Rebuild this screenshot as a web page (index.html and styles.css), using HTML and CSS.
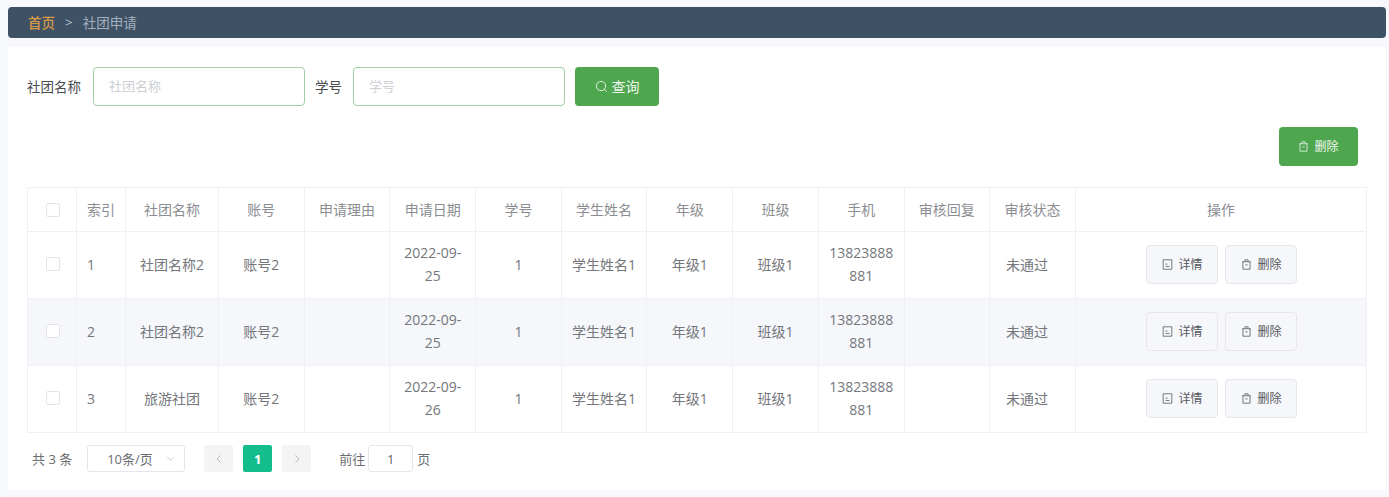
FILE: index.html
```html
<!DOCTYPE html>
<html lang="zh-CN">
<head>
    <meta charset="UTF-8">
    <title>社团申请</title>
    <link rel="stylesheet" href="styles.css">
</head>
<body>
    <div class="crumb">
        <span class="crumb-home">首页</span>
        <span class="crumb-sep">&gt;</span>
        <span class="crumb-now">社团申请</span>
    </div>

    <div class="panel">
        <div class="search">
            <label class="search-label">社团名称</label>
            <input class="search-input" placeholder="社团名称">
            <label class="search-label label-gap">学号</label>
            <input class="search-input" placeholder="学号">
            <button class="btn-green btn-search">
                <svg class="icon" viewBox="0 0 14 14"><circle cx="6.500" cy="6.500" r="5"/><path d="M10 10l2.500 2.500"/></svg>
                查询
            </button>
        </div>

        <div class="tools">
            <button class="btn-green btn-remove">
                <svg class="icon icon-small" viewBox="0 0 14 14"><path d="M1.500 3.500h11M5 3.500V1h4v2.500M2.500 3.500V13h9V3.500M5.500 7.500h3"/></svg>
                删除
            </button>
        </div>

        <table class="grid">
            <colgroup>
                <col class="c-check"><col class="c-index"><col class="c-name">
                <col class="c-std"><col class="c-std"><col class="c-std"><col class="c-std">
                <col class="c-std"><col class="c-std"><col class="c-std"><col class="c-std">
                <col class="c-std"><col class="c-std"><col>
            </colgroup>
            <thead>
                <tr>
                    <th><span class="check"></span></th>
                    <th>索引</th><th>社团名称</th><th>账号</th><th>申请理由</th><th>申请日期</th><th>学号</th>
                    <th>学生姓名</th><th>年级</th><th>班级</th><th>手机</th><th>审核回复</th><th>审核状态</th><th>操作</th>
                </tr>
            </thead>
            <tbody>
                <tr>
                    <td><span class="check"></span></td>
                    <td class="left">1</td><td>社团名称2</td><td>账号2</td><td></td><td>2022-09-25</td><td>1</td>
                    <td>学生姓名1</td><td>年级1</td><td>班级1</td><td>13823888881</td><td></td><td><span class="status">未通过</span></td>
                    <td>
                        <div class="ops">
                            <button class="btn-plain"><svg class="icon icon-small" viewBox="0 0 14 14"><path d="M1.500 1h11v12h-11zM4.500 9.500h5M4.500 6.500h2.500"/></svg>详情</button>
                            <button class="btn-plain"><svg class="icon icon-small" viewBox="0 0 14 14"><path d="M1.500 3.500h11M5 3.500V1h4v2.500M2.500 3.500V13h9V3.500M5.500 7.500h3"/></svg>删除</button>
                        </div>
                    </td>
                </tr>
                <tr class="striped">
                    <td><span class="check"></span></td>
                    <td class="left">2</td><td>社团名称2</td><td>账号2</td><td></td><td>2022-09-25</td><td>1</td>
                    <td>学生姓名1</td><td>年级1</td><td>班级1</td><td>13823888881</td><td></td><td><span class="status">未通过</span></td>
                    <td>
                        <div class="ops">
                            <button class="btn-plain"><svg class="icon icon-small" viewBox="0 0 14 14"><path d="M1.500 1h11v12h-11zM4.500 9.500h5M4.500 6.500h2.500"/></svg>详情</button>
                            <button class="btn-plain"><svg class="icon icon-small" viewBox="0 0 14 14"><path d="M1.500 3.500h11M5 3.500V1h4v2.500M2.500 3.500V13h9V3.500M5.500 7.500h3"/></svg>删除</button>
                        </div>
                    </td>
                </tr>
                <tr>
                    <td><span class="check"></span></td>
                    <td class="left">3</td><td>旅游社团</td><td>账号2</td><td></td><td>2022-09-26</td><td>1</td>
                    <td>学生姓名1</td><td>年级1</td><td>班级1</td><td>13823888881</td><td></td><td><span class="status">未通过</span></td>
                    <td>
                        <div class="ops">
                            <button class="btn-plain"><svg class="icon icon-small" viewBox="0 0 14 14"><path d="M1.500 1h11v12h-11zM4.500 9.500h5M4.500 6.500h2.500"/></svg>详情</button>
                            <button class="btn-plain"><svg class="icon icon-small" viewBox="0 0 14 14"><path d="M1.500 3.500h11M5 3.500V1h4v2.500M2.500 3.500V13h9V3.500M5.500 7.500h3"/></svg>删除</button>
                        </div>
                    </td>
                </tr>
            </tbody>
        </table>

        <div class="pager">
            <span class="pager-total">共 3 条</span>
            <div class="pager-size">
                <span>10条/页</span>
                <svg class="chevron" viewBox="0 0 10 10"><path d="M1.500 3.500L5 7l3.500-3.500"/></svg>
            </div>
            <button class="page-btn page-prev"><svg class="arrow" viewBox="0 0 10 10"><path d="M6.500 1.500L3 5l3.500 3.500"/></svg></button>
            <button class="page-btn page-on">1</button>
            <button class="page-btn"><svg class="arrow" viewBox="0 0 10 10"><path d="M3.500 1.500L7 5 3.500 8.500"/></svg></button>
            <span class="pager-goto">前往</span>
            <input class="pager-input" value="1">
            <span>页</span>
        </div>
    </div>
</body>
</html>
```

FILE: styles.css
```css
* {
    box-sizing: border-box;
}

html, body {
    height: 100%;
}

body {
    margin: 0;
    padding: 7px 3px 0 8px;
    background-color: #f6f8fb;
    font-family: "Open Sans", "Noto Sans CJK SC", sans-serif;
    font-size: 14px;
    color: #606266;
    overflow: hidden;
}

.crumb {
    display: flex;
    align-items: center;
    height: 31px;
    padding: 0 0 1px 20px;
    background-color: #3f5165;
    border-radius: 4px;
    font-size: 13.500px;
}

.crumb-home {
    color: #d79a45;
    font-weight: 500;
}

.crumb-sep {
    margin: 0 10px;
    color: #b4bfcb;
}

.crumb-now {
    color: #a3b0bf;
}

.panel {
    height: 443px;
    margin-top: 9px;
    padding: 20px 19px 0;
    background-color: #fff;
}

.search {
    display: flex;
    align-items: center;
    height: 39px;
}

.search-label {
    margin-right: 12px;
    padding-bottom: 2px;
    font-size: 13.500px;
    color: #4a4c50;
}

.label-gap {
    margin-left: 10px;
    margin-right: 11px;
}

.search-input {
    width: 212px;
    height: 39px;
    padding: 0 15px 2px;
    border: 1px solid #a0d0a2;
    border-radius: 4px;
    outline: none;
    font-family: inherit;
    font-size: 13px;
}

.search-input::placeholder {
    color: #cdcfd4;
}

.btn-green {
    display: flex;
    align-items: center;
    justify-content: center;
    height: 39px;
    padding-bottom: 2px;
    border: none;
    border-radius: 4px;
    background-color: #4ea64f;
    color: #eef6ee;
    font-family: inherit;
}

.btn-search {
    width: 84px;
    margin-left: 10px;
    font-size: 14px;
}

.tools {
    display: flex;
    justify-content: flex-end;
    padding: 21px 9px 21px 0;
}

.btn-remove {
    width: 79px;
    font-size: 12px;
}

.icon {
    width: 13px;
    height: 13px;
    margin-right: 4px;
    fill: none;
    stroke: currentColor;
    stroke-width: 1;
}

.icon-small {
    width: 11px;
    height: 11px;
    margin-right: 5px;
}

.grid {
    width: 1340px;
    table-layout: fixed;
    border-collapse: collapse;
    font-size: 14px;
}

.c-check,
.c-index {
    width: 49px;
}

.c-name {
    width: 93px;
}

.c-std {
    width: 85.700px;
}

.grid th,
.grid td {
    padding: 0 10px;
    border: 1px solid #eef0f4;
    text-align: center;
    font-weight: 400;
    line-height: 23px;
    word-break: break-all;
}

.grid th {
    height: 44px;
    color: #8b8d92;
}

.grid td {
    height: 67px;
    padding-bottom: 2px;
    color: #74767b;
}

.grid td.left {
    text-align: left;
}

.striped td {
    background-color: #f5f7fb;
}

.status {
    display: block;
    padding-right: 11px;
}

.check {
    display: block;
    width: 14px;
    height: 14px;
    margin: 0 auto;
    border: 1px solid #e2e4e9;
    border-radius: 2px;
    background-color: #fff;
    transform: translateX(1px);
}

.ops {
    display: flex;
    justify-content: center;
    gap: 7px;
    padding-left: 2px;
}

.btn-plain {
    display: flex;
    align-items: center;
    justify-content: center;
    width: 72px;
    height: 39px;
    padding: 0;
    border: 1px solid #e8e6ea;
    border-radius: 4px;
    background-color: #f5f7fb;
    color: #55575c;
    font-family: inherit;
    font-size: 12px;
}

.pager {
    display: flex;
    align-items: center;
    height: 27px;
    margin-top: 12px;
    padding-left: 5px;
    font-size: 13px;
    color: #6b6d72;
}

.pager-total {
    margin-right: 15px;
}

.pager-size {
    display: flex;
    align-items: center;
    justify-content: space-between;
    width: 98px;
    height: 27px;
    padding: 0 9px 0 19px;
    border: 1px solid #e4e6eb;
    border-radius: 3px;
}

.chevron {
    width: 9px;
    height: 9px;
    fill: none;
    stroke: #c3c5ca;
}

.page-btn {
    display: flex;
    align-items: center;
    justify-content: center;
    width: 29px;
    height: 27px;
    margin-left: 10px;
    padding: 0;
    border: none;
    border-radius: 2px;
    background-color: #f4f4f5;
    font-family: inherit;
}

.page-prev {
    margin-left: 19px;
}

.page-on {
    background-color: #14bd8c;
    color: #fff;
    font-size: 13px;
    font-weight: 700;
}

.arrow {
    width: 10px;
    height: 10px;
    fill: none;
    stroke: #b9bbc0;
}

.pager-goto {
    margin-left: 28px;
    margin-right: 3px;
}

.pager-input {
    width: 45px;
    height: 27px;
    margin-right: 4px;
    border: 1px solid #e4e6eb;
    border-radius: 3px;
    outline: none;
    text-align: center;
    font-family: inherit;
    font-size: 13px;
    color: #606266;
}
```
